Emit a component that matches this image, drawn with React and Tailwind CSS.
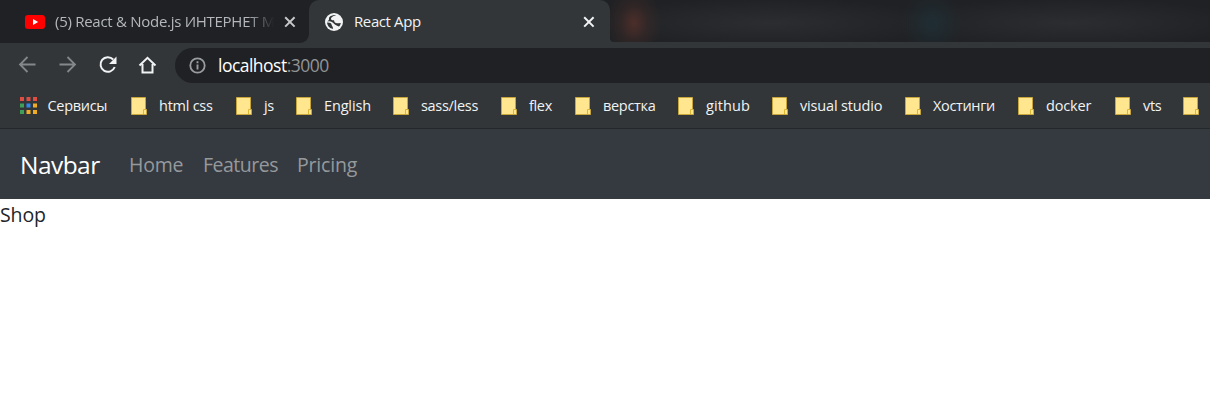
import React from "react";

const bookmarks = [
  { label: "html css", box: "w-[105px]", track: "tracking-[-0.25px]" },
  { label: "js", box: "w-[60px]", track: "tracking-[-0.35px]" },
  { label: "English", box: "w-[97px]", track: "tracking-[-0.15px]" },
  { label: "sass/less", box: "w-[108px]", track: "tracking-[-0.3px]" },
  { label: "flex", box: "w-[74px]", track: "tracking-[-0.35px]" },
  { label: "верстка", box: "w-[103px]", track: "tracking-[-0.3px]" },
  { label: "github", box: "w-[94px]", track: "tracking-[0.1px]" },
  { label: "visual studio", box: "w-[133px]", track: "tracking-[-0.17px]" },
  { label: "Хостинги", box: "w-[113px]", track: "tracking-[-0.35px]" },
  { label: "docker", box: "w-[97px]", track: "tracking-[-0.15px]" },
  { label: "vts", box: "w-[68px]", track: "tracking-[-0.35px]" },
  { label: "", box: "w-[27px]", track: "" },
];

function Folder() {
  return (
    <svg width="16" height="18" viewBox="0 0 16 18" className="shrink-0">
      <path d="M.5.5h14v12h1v5H.5z" fill="#ffe68f" stroke="#c9a63c" />
      <path d="M12.5 17v-4.5h2" fill="none" stroke="#dfb633" />
    </svg>
  );
}

function Close({ color }) {
  return (
    <svg width="12" height="12" viewBox="0 0 12 12" stroke={color} strokeWidth="2" className="shrink-0">
      <path d="M1.2 1.2l9.4 9.4M10.6 1.2l-9.4 9.4" />
    </svg>
  );
}

function TabStrip() {
  return (
    <div className="flex h-[43px] bg-[#323638]">
      <div className="flex h-[43px] w-[309px] shrink-0 items-center rounded-br-[9px] bg-[#202124] pl-[25px]">
        <svg width="20" height="14" viewBox="0 0 20 14" className="shrink-0">
          <rect width="20" height="14" rx="3" fill="#f00" />
          <path d="M8 4l5.2 3L8 10z" fill="#fff" />
        </svg>
        <div className="relative -top-px ml-[10px] w-[219px] whitespace-nowrap text-[15px] leading-5 tracking-[-0.28px] text-[#b4b8bc] [mask-image:linear-gradient(to_right,black_88%,transparent)]">
          (5) React &amp; Node.js ИНТЕРНЕТ М
        </div>
        <div className="ml-[10px]"><Close color="#c6c8ca" /></div>
      </div>
      <div className="h-[43px] w-[301px] shrink-0 bg-[#202124]">
        <div className="h-full rounded-t-[10px] bg-[#323638]">
          <div className="flex h-full items-center pl-4">
            <svg width="18" height="18" viewBox="0 0 18 18" className="shrink-0">
              <circle cx="9" cy="9" r="9" fill="#f1f3f4" />
              <path d="M11 2.200C9 2.400 6.200 4 6 5.700c0 1.300 1.500 1.600 3 1.500.2 1.900 1.300 3 3.100 3 1.300 0 2.400-.3 3.700-.3-.2 1.500-.9 2.800-1.900 3.700-1.200-.8-3.400-1.300-4.900-2.800C7.600 9.300 6.500 8.400 4 8.300l-1.700.1L3.900 7l.2-2.600C6 2.500 8.500 1.600 11 2.200z" fill="#323638" />
              <path d="M2.100 9.600c2.700-.1 4.400.7 4.600 2.400.1 1.200 1.500 1.500 1.300 4C4.600 15.500 2.200 12.900 2.100 9.600z" fill="#323638" />
            </svg>
            <div className="relative -top-px ml-[11px] w-[229px] whitespace-nowrap text-[15px] leading-5 tracking-[-0.4px] text-[#f1f3f4]">React App</div>
            <Close color="#f1f3f4" />
          </div>
        </div>
      </div>
      <div className="h-[42px] min-w-0 flex-1 rounded-bl-[4px] bg-[#202124] bg-[radial-gradient(ellipse_27px_36px_at_24px_23px,#4c2e29,#4c2e2955_50%,transparent),radial-gradient(ellipse_30px_34px_at_322px_23px,#1c343c99,transparent),radial-gradient(ellipse_175px_25px_at_160px_23px,#2c2d30,transparent),radial-gradient(ellipse_175px_25px_at_460px_23px,#2c2d30,transparent)]" />
    </div>
  );
}

function Toolbar() {
  return (
    <div className="flex h-[45px] items-center pb-px">
      <svg width="175" height="36" viewBox="0 0 175 36" fill="none" className="shrink-0">
        <path d="M35.500 17.500H20.500M27.500 10L20 17.500l7.500 7.500" stroke="#85888b" strokeWidth="1.800" />
        <path d="M59.500 17.500h15M67.500 10L75 17.500l-7.500 7.500" stroke="#85888b" strokeWidth="1.800" />
        <path d="M113.200 12.500A7.300 7.300 0 1 0 114.700 20" stroke="#f1f3f4" strokeWidth="2" />
        <path d="M116.500 9.500v7.500H109z" fill="#f1f3f4" />
        <path d="M139.500 18.500l8-7.700 8 7.700M142.500 17v8.500h10V17" stroke="#f1f3f4" strokeWidth="2" />
      </svg>
      <div className="flex h-[35px] flex-1 items-center rounded-l-[18px] bg-[#202124] pl-[14px]">
        <svg width="17" height="17" viewBox="0 0 17 17" fill="none" className="shrink-0">
          <circle cx="8.500" cy="8.500" r="7.200" stroke="#9a9da0" strokeWidth="1.800" />
          <path d="M8.500 7.500v5M8.500 4.300v1.900" stroke="#9a9da0" strokeWidth="1.900" />
        </svg>
        <div className="ml-3 whitespace-nowrap text-[17.5px] leading-6 tracking-[-0.52px] text-white">
          localhost<span className="text-[#919497]">:3000</span>
        </div>
      </div>
    </div>
  );
}

function Bookmarks() {
  return (
    <div className="flex h-[41px] items-center overflow-hidden border-b border-[#25282b] pb-[5px] text-[14.5px] leading-5 text-[#f1f3f4]">
      <div className="flex w-[131px] shrink-0 items-center pl-5">
        <svg width="17" height="17" viewBox="0 0 17 17" className="shrink-0">
          <path d="M0 0h4v4H0zM6.500 0h4v4h-4zM13 0h4v4h-4z" fill="#df4d43" />
          <path d="M0 6.500h4v4H0zM0 13h4v4H0z" fill="#3f9e58" />
          <path d="M6.500 6.500h4v4h-4z" fill="#3186ee" />
          <path d="M13 6.500h4v4h-4zM6.500 13h4v4h-4zM13 13h4v4h-4z" fill="#efac24" />
        </svg>
        <span className="ml-[10.5px] tracking-[-0.3px]">Сервисы</span>
      </div>
      {bookmarks.map((item, index) => (
        <div key={index} className={`flex shrink-0 items-center whitespace-nowrap ${item.box}`}>
          <Folder />
          <span className={`ml-3 ${item.track}`}>{item.label}</span>
        </div>
      ))}
    </div>
  );
}

export default function App() {
  return (
    <div className="h-[410px] overflow-hidden bg-white font-['Open_Sans','Noto_Sans',sans-serif]">
      <header className="bg-[#323638]">
        <TabStrip />
        <Toolbar />
        <Bookmarks />
      </header>
      <nav className="flex h-[70px] items-center bg-[#353a40] pt-[3px] pl-5 text-[19.5px] text-[#96999c]">
        <a className="w-[109px] text-[24.5px] tracking-[-0.55px] text-white">Navbar</a>
        <a className="w-[74px] pb-px tracking-[-0.2px]">Home</a>
        <a className="w-[94px] pb-px tracking-[-0.5px]">Features</a>
        <a className="pb-px tracking-[-0.2px]">Pricing</a>
      </nav>
      <main className="pt-px text-[19.5px] leading-[30px] tracking-[-0.1px] text-[#212529]">Shop</main>
    </div>
  );
}
